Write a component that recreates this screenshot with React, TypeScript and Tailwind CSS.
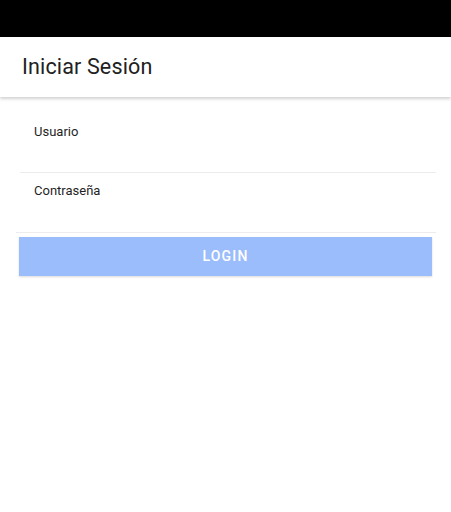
export default function App() {
  return (
    <div
      className="h-[512px] w-[451px] bg-white flex flex-col overflow-hidden"
      style={{ fontFamily: "Roboto, 'Noto Sans', sans-serif" }}
    >
      {/* Status bar */}
      <div className="h-[37px] bg-black shrink-0" />

      {/* Header */}
      <div className="h-[60px] shrink-0 bg-white flex items-center px-[22px] shadow-[0_2px_3px_rgba(0,0,0,0.18)] z-10">
        <h1 className="text-[21.5px] text-[#212121] tracking-[0.15px]">Iniciar Sesión</h1>
      </div>

      {/* Form */}
      <div className="flex flex-col">
        <div className="h-[76px] ml-[20px] mr-[15px] border-b border-[#ececec] pl-[14px] pt-[22px]">
          <span className="text-[13px] text-[#1f1f1f]">Usuario</span>
        </div>
        <div className="h-[60px] ml-[16px] mr-[15px] border-b border-[#ececec] pl-[18px] pt-[5px]">
          <span className="text-[13px] text-[#1f1f1f]">Contraseña</span>
        </div>
        <div className="px-[19px] mt-[4px]">
          <button className="w-[413px] h-[39px] bg-[#9bbdfc] text-white font-medium text-[14px] tracking-[1.2px] shadow-[0_1px_2px_rgba(0,0,0,0.15)]">
            LOGIN
          </button>
        </div>
      </div>
    </div>
  );
}
